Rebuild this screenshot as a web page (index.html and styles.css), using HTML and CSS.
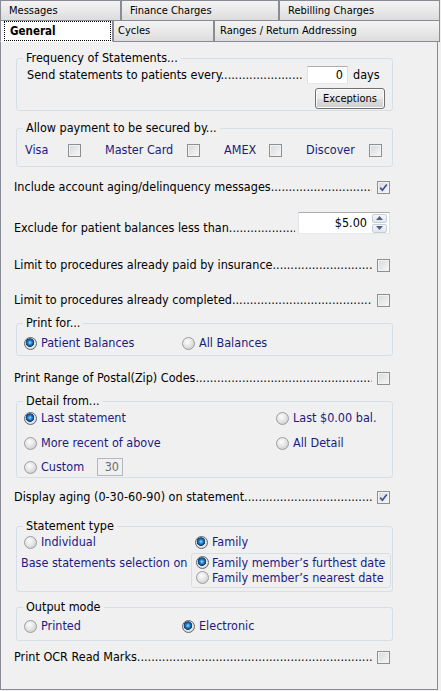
FILE: index.html
```html
<!DOCTYPE html>
<html>
	<head>
		<meta charset="utf-8">
		<title>Statements - General</title>
		<link rel="stylesheet" href="styles.css">
	</head>
	<body>
		<div class="tabs">
			<div class="tabrow back">
				<div class="tab t_msg">Messages</div>
				<div class="tab t_fin">Finance Charges</div>
				<div class="tab t_reb">Rebilling Charges</div>
			</div>
			<div class="tabrow front">
				<div class="tab t_gen sel"><span class="focus">General</span></div>
				<div class="tab t_cyc">Cycles</div>
				<div class="tab t_rng">Ranges / Return Addressing</div>
			</div>
		</div>
		<div class="page">
			<fieldset class="grp g_freq">
				<legend>Frequency of Statements...</legend>
				<div class="days_row">
					<span class="lead">Send statements to patients every..................................................</span>
					<span class="txt days_box">0</span>
					<span class="unit">days</span>
				</div>
				<div class="btn_row"><button type="button" class="btn">Exceptions</button></div>
			</fieldset>

			<fieldset class="grp g_pay">
				<legend>Allow payment to be secured by...</legend>
				<div class="pay_row">
					<span class="pay">Visa <span class="cb"></span></span>
					<span class="pay">Master Card <span class="cb"></span></span>
					<span class="pay">AMEX <span class="cb"></span></span>
					<span class="pay">Discover <span class="cb"></span></span>
				</div>
			</fieldset>

			<div class="line l_aging_msg">
				<span class="lead">Include account aging/delinquency messages..................................................</span>
				<span class="cb on"><svg width="11" height="11" viewBox="0 0 11 11"><path d="M2.2 5.6 L4.4 8.2 L8.8 2.4" fill="none" stroke="#3f4f95" stroke-width="1.7"/></svg></span>
			</div>

			<div class="line l_exclude">
				<span class="lead">Exclude for patient balances less than..................................................</span>
				<span class="txt money_box">
					<span class="val">$5.00</span>
					<span class="spin">
						<span class="spin_btn"><svg width="7" height="4" viewBox="0 0 7 4"><path d="M0 4 L3.5 0 L7 4 Z" fill="#4d5f8a"/></svg></span>
						<span class="spin_btn"><svg width="7" height="4" viewBox="0 0 7 4"><path d="M0 0 L3.5 4 L7 0 Z" fill="#4d5f8a"/></svg></span>
					</span>
				</span>
			</div>

			<div class="line l_paid">
				<span class="lead">Limit to procedures already paid by insurance..................................................</span>
				<span class="cb"></span>
			</div>

			<div class="line l_done">
				<span class="lead">Limit to procedures already completed..................................................</span>
				<span class="cb"></span>
			</div>

			<fieldset class="grp g_print">
				<legend>Print for...</legend>
				<div class="radio_row cols_158">
					<span class="opt"><span class="rd on"></span>Patient Balances</span>
					<span class="opt"><span class="rd"></span>All Balances</span>
				</div>
			</fieldset>

			<div class="line l_zip">
				<span class="lead">Print Range of Postal(Zip) Codes..................................................</span>
				<span class="cb"></span>
			</div>

			<fieldset class="grp g_detail">
				<legend>Detail from...</legend>
				<div class="radio_row cols_252 d_first">
					<span class="opt"><span class="rd on"></span>Last statement</span>
					<span class="opt"><span class="rd"></span>Last $0.00 bal.</span>
				</div>
				<div class="radio_row cols_252 d_second">
					<span class="opt"><span class="rd"></span>More recent of above</span>
					<span class="opt"><span class="rd"></span>All Detail</span>
				</div>
				<div class="radio_row d_third">
					<span class="opt"><span class="rd"></span><span class="custom_lbl">Custom</span><span class="txt custom_box">30</span></span>
				</div>
			</fieldset>

			<div class="line l_aging">
				<span class="lead">Display aging (0-30-60-90) on statement..................................................</span>
				<span class="cb on"><svg width="11" height="11" viewBox="0 0 11 11"><path d="M2.2 5.6 L4.4 8.2 L8.8 2.4" fill="none" stroke="#3f4f95" stroke-width="1.7"/></svg></span>
			</div>

			<fieldset class="grp g_type">
				<legend>Statement type</legend>
				<div class="radio_row cols_171 t_first">
					<span class="opt"><span class="rd"></span>Individual</span>
					<span class="opt"><span class="rd on"></span>Family</span>
				</div>
				<div class="base_row">
					<span class="base_lbl">Base statements selection on</span>
					<div class="base_box">
						<span class="opt"><span class="rd on"></span>Family member’s furthest date</span>
						<span class="opt"><span class="rd"></span>Family member’s nearest date</span>
					</div>
				</div>
			</fieldset>

			<fieldset class="grp g_out">
				<legend>Output mode</legend>
				<div class="radio_row cols_158">
					<span class="opt"><span class="rd"></span>Printed</span>
					<span class="opt"><span class="rd on"></span>Electronic</span>
				</div>
			</fieldset>

			<div class="line l_ocr">
				<span class="lead">Print OCR Read Marks......................................................................................</span>
				<span class="cb"></span>
			</div>
		</div>
	</body>
</html>
```

FILE: styles.css
```css
body {
    margin: 0;
    background: #f0f0f0;
    font-family: "DejaVu Sans Condensed", "DejaVu Sans", sans-serif;
    font-stretch: condensed;
    font-size: 12.5px;
    line-height: 16px;
    color: #000;
}

/* tab strip, two rows */
.tabs {
    width: 440px;
}
.tabrow {
    display: flex;
}
.tabrow.back {
    height: 20px;
}
.tabrow.front {
    height: 22px;
}
.tab {
    box-sizing: border-box;
    height: 100%;
    border: 1px solid #898c95;
    background: linear-gradient(#f3f3f3, #e9e9e9 50%, #dcdcdc);
    font-size: 11px;
    padding-left: 8px;
    display: flex;
    align-items: center;
    color: #000;
}
.back .tab {
    border-bottom: none;
}
.t_msg { width: 121px; }
.t_fin { width: 158px; }
.t_reb { width: 161px; }
.t_gen { width: 113px; }
.t_cyc { width: 101px; padding-left: 4px; }
.t_rng { width: 226px; padding-left: 5px; }
.tab.sel {
    background: #fff;
    border-bottom-color: #fff;
    padding: 0;
}
.tab.sel .focus {
    box-sizing: border-box;
    display: flex;
    align-items: center;
    width: 107px;
    height: 20px;
    margin: 0 0 0 3px;
    padding-left: 5px;
    border: 1px dotted #000;
    font-weight: bold;
    font-size: 11.5px;
}

/* page under the tabs */
.page {
    box-sizing: border-box;
    width: 438px;
    height: 648px;
    border: 1px solid #898c95;
    border-top: none;
    padding-left: 13px;
    display: flex;
    flex-direction: column;
    align-items: flex-start;
}

.grp {
    box-sizing: border-box;
    width: 377px;
    margin: 0 0 0 2px;
    padding: 0;
    border: 1px solid #d5dfe5;
    border-radius: 3px;
    min-width: 0;
}
.grp legend {
    margin-left: 6px;
    padding: 0 3px;
    line-height: 14px;
}

.g_freq { margin-top: 9px; padding-bottom: 1px; }
.g_pay { margin-top: 10px; padding-bottom: 8px; }
.g_print { margin-top: 8px; padding-bottom: 4px; }
.g_detail { margin-top: 8px; padding-bottom: 1px; }
.g_type { margin-top: 14px; padding-bottom: 3px; }
.g_out { margin-top: 8px; padding-bottom: 6px; }

/* leader rows */
.line {
    display: flex;
    align-items: center;
    width: 376px;
    height: 16px;
}
.lead {
    flex: 1;
    overflow: hidden;
    white-space: nowrap;
    margin-right: 5px;
}
.l_aging_msg { margin-top: 12px; }
.l_exclude {
    margin-top: 17px;
    height: 24px;
    align-items: flex-start;
}
.l_exclude .lead {
    align-self: flex-end;
    margin-right: 3px;
}
.l_paid { margin-top: 21px; }
.l_done { margin-top: 19px; }
.l_zip { margin-top: 14px; }
.l_aging { margin-top: 11px; }
.l_ocr { margin-top: 8px; }

/* text boxes */
.txt {
    box-sizing: border-box;
    display: flex;
    align-items: center;
    justify-content: flex-end;
    background: #fff;
    border: 1px solid;
    border-color: #abadb3 #dbdfe6 #e3e9ef #e2e3ea;
}
.days_row {
    display: flex;
    align-items: center;
    height: 18px;
    margin: 1px 0 0 10px;
}
.days_row .lead {
    flex: none;
    width: 276px;
    margin-right: 4px;
}
.days_box {
    width: 41px;
    height: 18px;
    padding-right: 4px;
}
.unit {
    margin-left: 5px;
}
.btn_row {
    display: flex;
    justify-content: flex-end;
    padding-right: 7px;
    margin-top: 4px;
}
.btn {
    width: 70px;
    height: 21px;
    padding: 0;
    border: 1px solid #707070;
    border-radius: 3px;
    background: linear-gradient(#f2f2f2, #ebebeb 50%, #dddddd 50%, #cfcfcf);
    box-shadow: inset 0 0 0 1px #fcfcfc;
    font-family: inherit;
    font-stretch: condensed;
    font-size: 11px;
    color: #000;
}

.money_box {
    width: 92px;
    height: 22px;
    padding-right: 2px;
}
.money_box .val {
    margin-right: 5px;
}
.spin {
    display: flex;
    flex-direction: column;
    gap: 1px;
    width: 15px;
}
.spin_btn {
    box-sizing: border-box;
    display: flex;
    align-items: center;
    justify-content: center;
    height: 9px;
    border: 1px solid #c8ced8;
    border-radius: 2px;
    background: linear-gradient(#f6f8fa, #e2e6ec);
}

/* check boxes and radios */
.cb {
    box-sizing: border-box;
    display: inline-flex;
    align-items: center;
    justify-content: center;
    flex: none;
    width: 13px;
    height: 13px;
    border: 1px solid #8e8f8f;
    background: linear-gradient(135deg, #d6d8db, #f8f8f8);
    box-shadow: inset 0 0 0 1px #f2f2f2;
}
.rd {
    box-sizing: border-box;
    display: inline-block;
    flex: none;
    width: 13px;
    height: 13px;
    margin-right: 4px;
    border-radius: 50%;
    border: 1px solid #9a9da2;
    background: radial-gradient(circle at 40% 35%, #fdfdfd, #e6e6e6 45%, #cfcfcf 80%);
}
.rd.on {
    border-color: #5d6670;
    background: radial-gradient(circle at 45% 42%, #a8e0ff 0, #3a9ae0 1.5px, #0f5e9e 3px, #1d3d63 4px, #e8e8e8 4.6px, #d8d8d8 80%);
}

.pay_row {
    display: grid;
    grid-template-columns: 56px 95px 58px 76px;
    column-gap: 24px;
    margin: 7px 0 0 8px;
    height: 16px;
    align-items: center;
}
.pay {
    display: flex;
    align-items: center;
    justify-content: space-between;
    color: #1b1b80;
}

.radio_row {
    display: grid;
    grid-template-columns: 158px auto;
    align-items: center;
    height: 16px;
    margin-left: 7px;
}
.cols_158 { grid-template-columns: 158px auto; }
.cols_171 { grid-template-columns: 171px auto; }
.cols_252 { grid-template-columns: 252px auto; }
.opt {
    display: flex;
    align-items: center;
    color: #1b1b80;
    white-space: nowrap;
}
.g_print .radio_row { margin-top: 5px; }
.g_out .radio_row { margin-top: 4px; }
.d_first { margin-top: 2px; }
.d_second { margin-top: 9px; }
.d_third {
    margin-top: 7px;
    height: 18px;
}
.custom_lbl {
    width: 56px;
}
.custom_box {
    width: 26px;
    height: 18px;
    padding-right: 3px;
    background: #f0f0f0;
    border-color: #b5b7ba;
    color: #6d6d6d;
}

.t_first { margin-top: 1px; }
.base_row {
    display: flex;
    align-items: flex-start;
    margin: 3px 0 0 4px;
    height: 35px;
}
.base_lbl {
    width: 170px;
    margin-top: 2px;
    color: #1b1b80;
}
.base_box {
    box-sizing: border-box;
    width: 200px;
    height: 35px;
    padding: 1px 0 0 4px;
    border: 1px solid #d5dfe5;
    border-radius: 3px;
    line-height: 15px;
}
.base_box .opt {
    height: 15px;
}
.base_box .rd {
    margin-right: 3px;
}
```
